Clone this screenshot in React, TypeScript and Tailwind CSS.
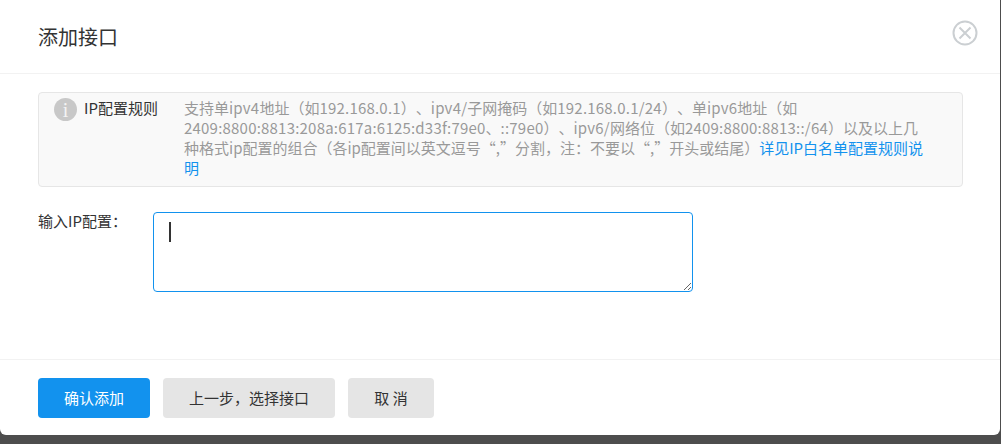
const fontStack = "font-['Noto_Sans_CJK_SC','Noto_Sans',sans-serif] [text-spacing-trim:space-all] [font-feature-settings:'palt'_0,'chws'_0]";

// the latin runs in the rule text sit a little wider than the font's own metrics
const Latin = ({ children }: { children: string }) => <span className="tracking-[0.21px]">{children}</span>;

const InfoIcon = () => (
  <div className="w-[23px] h-[23px] shrink-0 rounded-full bg-[#c8c8c8] flex items-center justify-center text-[#f4f4f4] text-[20px] leading-none font-['Liberation_Serif',serif]">
    i
  </div>
);

const CloseIcon = () => (
  <svg width="26" height="26" viewBox="0 0 26 26" fill="none" stroke="#cbcfd2" strokeWidth="2">
    <circle cx="13" cy="13" r="11.5" />
    <path d="M7.5 7.5l11 11M18.5 7.5l-11 11" />
  </svg>
);

const App = () => (
  <div className={`w-[1001px] h-[444px] overflow-hidden bg-[#4d4d4d] ${fontStack}`}>
    <div className="w-[1000px] h-[435px] bg-white rounded-b-[6px] flex flex-col">
      <div className="h-[74px] shrink-0 border-b border-[#f2f2f2] pl-[38px] pr-[22px] flex items-start justify-between">
        <h1 className="mt-[23px] text-[20px] leading-[28px] font-normal text-[#333]">添加接口</h1>
        <div className="mt-[20px]">
          <CloseIcon />
        </div>
      </div>

      <div className="h-[285px] shrink-0 px-[38px] pt-[18px]">
        <div className="w-[925px] h-[95px] rounded-[4px] border border-[#e6e6e6] bg-[#f9f9f9] pl-[15px] pt-[5px] pr-[30px] flex items-start">
          <InfoIcon />
          <div className="ml-[7px] w-[100px] shrink-0 text-[15px] leading-[20px] text-[#333]">IP配置规则</div>
          <p className="text-[15px] leading-[20px] text-[#999] whitespace-nowrap">
            支持单<Latin>ipv4</Latin>地址（如<Latin>192.168.0.1</Latin>）、<Latin>ipv4/</Latin>子网掩码（如<Latin>192.168.0.1/24</Latin>）、单<Latin>ipv6</Latin>地址（如
            <br />
            <Latin>2409:8800:8813:208a:617a:6125:d33f:79e0</Latin>、<Latin>::79e0</Latin>）、<Latin>ipv6/</Latin>网络位（如<Latin>2409:8800:8813::/64</Latin>）以及以上几
            <br />
            种格式ip配置的组合（各ip配置间以英文逗号“,”分割，注：不要以“,”开头或结尾）
            <span className="text-[#1292ee]">详见IP白名单配置规则说</span>
            <br />
            <span className="text-[#1292ee]">明</span>
          </p>
        </div>

        <div className="mt-[25px] flex items-start">
          <label className="w-[115px] shrink-0 text-[15px] leading-[20px] text-[#333] -mt-[1px]">输入IP配置：</label>
          <div className="relative w-[540px] h-[80px]">
            <textarea className="block w-[540px] h-[80px] rounded-[4px] border border-[#1292ee] bg-white outline-none resize" />
            <span className="absolute left-[16px] top-[10px] w-[2px] h-[20px] bg-[#333]" />
          </div>
        </div>
      </div>

      <div className="flex-1 border-t border-[#f2f2f2] pl-[38px] pt-[18px] flex items-start gap-[13px]">
        <button className="w-[112px] h-[40px] rounded-[4px] bg-[#1292ee] text-white text-[15px]">确认添加</button>
        <button className="w-[172px] h-[40px] rounded-[4px] bg-[#e5e5e5] text-[#333] text-[15px]">上一步，选择接口</button>
        <button className="w-[86px] h-[40px] rounded-[4px] bg-[#e5e5e5] text-[#333] text-[15px]">取 消</button>
      </div>
    </div>
  </div>
);

export default App;
